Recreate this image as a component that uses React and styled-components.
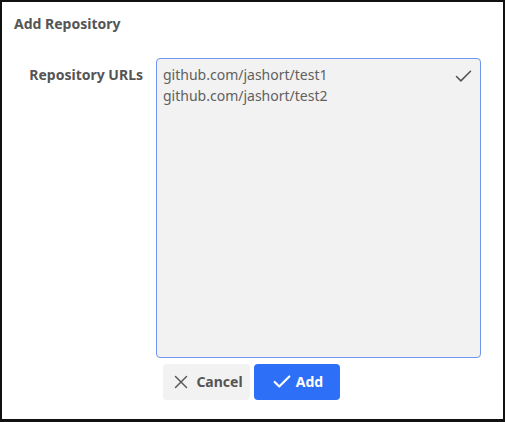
import { useEffect, useRef } from "react";
import styled, { createGlobalStyle } from "styled-components";
import { Check, X } from "lucide-react";

const GlobalStyle = createGlobalStyle`
  body {
    margin: 0;
    background: #fff;
    font-family: "Noto Sans", "Open Sans", sans-serif;
  }
`;

const Dialog = styled.div`
  box-sizing: border-box;
  width: 505px;
  height: 422px;
  border: 2px solid #111;
  border-bottom-width: 3px;
  background: #fff;
  padding: 12px 22px 0 12px;
`;

const Title = styled.h2`
  margin: 0;
  font-size: 14px;
  line-height: 20px;
  font-weight: 700;
  color: #555;
`;

const FormRow = styled.div`
  display: grid;
  grid-template-columns: 129px 325px;
  column-gap: 13px;
  margin-top: 24px;
`;

const Label = styled.label`
  text-align: right;
  font-size: 14px;
  line-height: 20px;
  font-weight: 700;
  color: #555;
  padding-top: 7px;
`;

const Field = styled.div`
  position: relative;
`;

const TextArea = styled.textarea`
  display: block;
  box-sizing: border-box;
  width: 100%;
  height: 300px;
  margin: 0;
  border: 1px solid #7096f0;
  border-radius: 4px;
  background: #f2f2f2;
  padding: 5px 6px;
  font-family: "Noto Sans", sans-serif;
  font-size: 14px;
  line-height: 21px;
  color: #606060;
  caret-color: #8fa6f2;
  resize: none;
  outline: none;
`;

const ValidIcon = styled(Check)`
  position: absolute;
  top: 8px;
  right: 7px;
  color: #555;
`;

const Actions = styled.div`
  grid-column: 2;
  display: flex;
  gap: 4px;
  margin: 6px 0 0 7px;
`;

const Button = styled.button`
  display: flex;
  align-items: center;
  justify-content: center;
  gap: ${({ $primary }) => ($primary ? "3px" : "4px")};
  width: ${({ $primary }) => ($primary ? "86px" : "87px")};
  height: 36px;
  padding: 0;
  border: none;
  border-radius: 4px;
  background: ${({ $primary }) => ($primary ? "#2d6ff6" : "#f2f2f2")};
  color: ${({ $primary }) => ($primary ? "#fff" : "#555")};
  font-family: "Noto Sans", sans-serif;
  font-size: 14px;
  line-height: 20px;
  font-weight: 700;
  cursor: pointer;
`;

const urls = "github.com/jashort/test1\ngithub.com/jashort/test2";

export default function App() {
  const areaRef = useRef(null);

  useEffect(() => {
    const el = areaRef.current;
    el.focus();
    el.setSelectionRange(urls.length, urls.length);
  }, []);

  return (
    <>
      <GlobalStyle />
      <Dialog>
        <Title>Add Repository</Title>
        <FormRow>
          <Label htmlFor="repo-urls">Repository URLs</Label>
          <Field>
            <TextArea id="repo-urls" ref={areaRef} defaultValue={urls} />
            <ValidIcon size={21} strokeWidth={1.8} />
          </Field>
          <Actions>
            <Button type="button">
              <X size={22} strokeWidth={1.6} />
              Cancel
            </Button>
            <Button type="button" $primary>
              <Check size={22} strokeWidth={2.4} />
              Add
            </Button>
          </Actions>
        </FormRow>
      </Dialog>
    </>
  );
}
